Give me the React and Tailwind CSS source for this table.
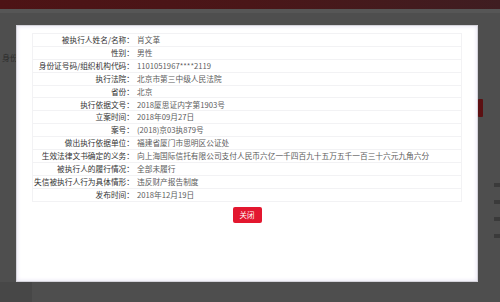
import React from 'react';

const ROWS = [
  ['被执行人姓名/名称：', '肖文革'],
  ['性别：', '男性'],
  ['身份证号码/组织机构代码：', '1101051967****2119'],
  ['执行法院：', '北京市第三中级人民法院'],
  ['省份：', '北京'],
  ['执行依据文号：', '2018厦思证内字第1903号'],
  ['立案时间：', '2018年09月27日'],
  ['案号：', '(2018)京03执879号'],
  ['做出执行依据单位：', '福建省厦门市思明区公证处'],
  ['生效法律文书确定的义务：', '向上海国际信托有限公司支付人民币六亿一千四百九十五万五千一百三十六元九角六分'],
  ['被执行人的履行情况：', '全部未履行'],
  ['失信被执行人行为具体情形：', '违反财产报告制度'],
  ['发布时间：', '2018年12月19日'],
];

function DetailRow({ label, value }) {
  return (
    <div className="grid grid-cols-[104px_1fr] h-[12.9px] items-center border-b border-[#f2f2f4]">
      <span className="text-right pr-[3px] text-[#333333] whitespace-nowrap">{label}</span>
      <span className="text-[#5c5c5c] whitespace-nowrap">{value}</span>
    </div>
  );
}

export default function App() {
  return (
    <div className="relative w-[500px] h-[302px] overflow-hidden bg-[#4e4e4e] font-['Noto_Sans_CJK_SC','Noto_Sans',sans-serif]">
      {/* page behind the overlay */}
      <div className="h-[9px] bg-gradient-to-r from-[#4d1315] via-[#4a1618] to-[#3f1d21]" />
      <div className="h-[4px] bg-[#565656]" />
      <div className="absolute left-[2px] top-[52px] text-[8px] text-[#2b2b2b]">身份</div>
      <div className="absolute left-[478px] top-[99px] w-[5px] h-[18px] rounded-[1px] bg-[#5c1012]" />
      <div className="absolute left-[494px] top-[183px] flex flex-col gap-[13px]">
        <div className="w-[6px] h-[4px] bg-[#3a3a3a]" />
        <div className="w-[6px] h-[4px] bg-[#3a3a3a]" />
        <div className="w-[6px] h-[4px] bg-[#3a3a3a]" />
        <div className="w-[6px] h-[4px] bg-[#3a3a3a]" />
      </div>
      <div className="absolute left-0 top-[282px] w-[32px] h-[20px] bg-[#474747]" />

      {/* modal */}
      <div className="absolute left-[16px] top-[25px] w-[462px] h-[257px] bg-white border border-[#d4d3da] shadow-[inset_0_0_4px_#e4e0f2] px-[15px] pt-[7px]">
        <div className="border-t border-x border-[#f2f2f4] text-[7.7px] leading-none">
          {ROWS.map(([label, value]) => (
            <DetailRow key={label} label={label} value={value} />
          ))}
        </div>
        <div className="flex justify-center mt-[5px]">
          <button className="w-[29px] h-[16px] rounded-[2px] bg-[#e3172f] text-white text-[7.5px] leading-none">
            关闭
          </button>
        </div>
      </div>
    </div>
  );
}
